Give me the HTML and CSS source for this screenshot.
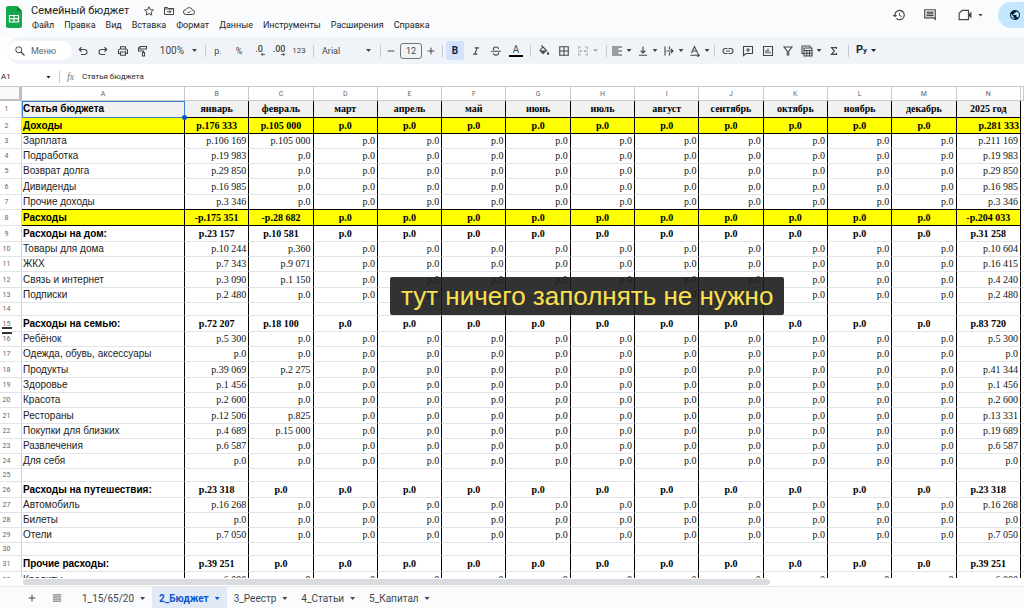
FILE: index.html
```html
<!DOCTYPE html>
<html lang="ru">
<head>
<meta charset="utf-8">
<title>Семейный бюджет</title>
<link rel="stylesheet" href="styles.css">
</head>
<body>
<svg class="sprite" aria-hidden="true">
  <symbol id="star" viewBox="0 0 24 24"><path d="M12 3.500l2.600 5.700 6.200.7-4.600 4.200 1.300 6.100L12 17l-5.500 3.200 1.300-6.100-4.600-4.200 6.200-.7z" fill="none" stroke="currentColor" stroke-width="2"/></symbol>
  <symbol id="move" viewBox="0 0 24 24"><path d="M3 5h6l2 2h10v12H3zM3 8h18M8 13.500h8M13 10.500l3 3-3 3" fill="none" stroke="currentColor" stroke-width="2"/></symbol>
  <symbol id="cloud" viewBox="0 0 24 24"><path d="M19 10.500A7 7 0 0 0 6 9a5 5 0 0 0 0 10h13a4.200 4.200 0 0 0 0-8.500zM8.500 13.500l2.500 2.500 4.500-4.500" fill="none" stroke="currentColor" stroke-width="2"/></symbol>
  <symbol id="history" viewBox="0 0 24 24"><path d="M13 3a9 9 0 0 0-9 9H1l4 4 4-4H6a7 7 0 1 1 2 5l-1.400 1.400A9 9 0 1 0 13 3zm-1 5v5l4.300 2.500.7-1.200-3.500-2.100V8z"/></symbol>
  <symbol id="chat" viewBox="0 0 24 24"><path d="M22 22l-4-4H2V2h20zM4 4v12h16V4zm2 2h12v2H6zm0 3h12v2H6zm0 3h12v2H6z" fill-rule="evenodd"/></symbol>
  <symbol id="meet" viewBox="0 0 24 24"><path d="M7 4h11v16H2V9z" fill="none" stroke="currentColor" stroke-width="2"/><path d="M18 11l5-5v12l-5-5z"/></symbol>
  <symbol id="globe" viewBox="0 0 24 24"><path d="M12 2a10 10 0 1 0 0 20 10 10 0 0 0 0-20zm-1 17.900A8 8 0 0 1 4.200 10.200L9 15v1a2 2 0 0 0 2 2zm6.900-2.500A2 2 0 0 0 16 16h-1v-3a1 1 0 0 0-1-1H8v-2h2a1 1 0 0 0 1-1V7h2a2 2 0 0 0 2-2v-.4a8 8 0 0 1 2.900 12.800z"/></symbol>
  <symbol id="search" viewBox="0 0 24 24"><circle cx="9.500" cy="9.500" r="6" fill="none" stroke="currentColor" stroke-width="2"/><path d="M14 14l7 7" stroke="currentColor" stroke-width="2.400"/></symbol>
  <symbol id="undo" viewBox="0 0 24 24"><path d="M8 19h7a5 5 0 0 0 0-10H5M9 4.500L4.500 9 9 13.500" fill="none" stroke="currentColor" stroke-width="2.200"/></symbol>
  <symbol id="redo" viewBox="0 0 24 24"><path d="M16 19H9A5 5 0 0 1 9 9h10M15 4.500L19.500 9 15 13.500" fill="none" stroke="currentColor" stroke-width="2.200"/></symbol>
  <symbol id="print" viewBox="0 0 24 24"><path d="M7 8V3.500h10V8M7 17H3V11a3 3 0 0 1 3-3h12a3 3 0 0 1 3 3v6h-4M7 14h10v6.500H7z" fill="none" stroke="currentColor" stroke-width="2.200"/><circle cx="17.500" cy="11.500" r="1.200"/></symbol>
  <symbol id="paint" viewBox="0 0 24 24"><path d="M6 3h13v5H6zM6 5.500H3V12h10v3M11 15h4v7h-4z" fill="none" stroke="currentColor" stroke-width="2.200"/></symbol>
  <symbol id="left" viewBox="0 0 24 24"><path d="M22 12H4M11 5l-7 7 7 7" fill="none" stroke="currentColor" stroke-width="4"/></symbol>
  <symbol id="right" viewBox="0 0 24 24"><path d="M2 12h18M13 5l7 7-7 7" fill="none" stroke="currentColor" stroke-width="4"/></symbol>
  <symbol id="minus" viewBox="0 0 24 24"><path d="M4 12h16" stroke="currentColor" stroke-width="2.400"/></symbol>
  <symbol id="plus" viewBox="0 0 24 24"><path d="M4 12h16M12 4v16" stroke="currentColor" stroke-width="2.400"/></symbol>
  <symbol id="italic" viewBox="0 0 24 24"><path d="M9 4.500h10M5 19.500h10M14.500 4.500l-5 15" fill="none" stroke="currentColor" stroke-width="2.800"/></symbol>
  <symbol id="strike" viewBox="0 0 24 24"><path d="M2 12.500h20M17 8c0-2.500-2-4-5-4S7 5.500 7 7.700c0 1 .4 1.800 1.200 2.400M7 16.500c0 2.300 2 3.700 5 3.700s5-1.400 5-3.700c0-.6-.1-1-.3-1.500" fill="none" stroke="currentColor" stroke-width="2.200"/></symbol>
  <symbol id="fill" viewBox="0 0 24 24"><path d="M7 1l3 3M10 4l7 7-7 6-6-6z" fill="none" stroke="currentColor" stroke-width="2.200"/><path d="M4.500 11h12L10 17z"/><path d="M20 13s-2.300 3-2.300 4.600a2.300 2.300 0 0 0 4.600 0C22.300 16 20 13 20 13z"/></symbol>
  <symbol id="borders" viewBox="0 0 24 24"><path d="M3.500 3.500h17v17h-17zM12 3v18M3 12h18" fill="none" stroke="currentColor" stroke-width="2.200"/></symbol>
  <symbol id="merge" viewBox="0 0 24 24"><path d="M8 4H3v4M3 16v4h5M16 4h5v4M21 16v4h-5M2 12h7M6.500 9l3 3-3 3M22 12h-7M17.500 9l-3 3 3 3" fill="none" stroke="currentColor" stroke-width="2"/></symbol>
  <symbol id="align" viewBox="0 0 24 24"><path d="M2 4h20M2 8h13M2 12h20M2 16h13M2 20h20" stroke="currentColor" stroke-width="2.200"/></symbol>
  <symbol id="valign" viewBox="0 0 24 24"><path d="M4 20.500h16M12 3v13M7.500 11.500L12 16l4.500-4.500" fill="none" stroke="currentColor" stroke-width="2.200"/></symbol>
  <symbol id="wrap" viewBox="0 0 24 24"><path d="M4 3v18M13 3v6M13 15v6M7 12h13M16 8l4 4-4 4" fill="none" stroke="currentColor" stroke-width="2.200"/></symbol>
  <symbol id="rotate" viewBox="0 0 24 24"><path d="M5 16L11 3l6 13M7 12h8M3 20.500h17M17 17l3.500 3.500L17 24" fill="none" stroke="currentColor" stroke-width="2.200"/></symbol>
  <symbol id="link" viewBox="0 0 24 24"><path d="M11 7H7a5 5 0 0 0 0 10h4M13 7h4a5 5 0 0 1 0 10h-4M8 12h8" fill="none" stroke="currentColor" stroke-width="2.200"/></symbol>
  <symbol id="note" viewBox="0 0 24 24"><path d="M3 3h18v14H8l-5 4zM12 6v8M8 10h8" fill="none" stroke="currentColor" stroke-width="2.200"/></symbol>
  <symbol id="chart" viewBox="0 0 24 24"><path d="M3 3h18v18H3zM8 17v-7M12 17V7M16 17v-4" fill="none" stroke="currentColor" stroke-width="2.200"/></symbol>
  <symbol id="filter" viewBox="0 0 24 24"><path d="M4 4h16l-6.500 8.500V20h-3v-7.500z" fill="none" stroke="currentColor" stroke-width="2.200"/></symbol>
  <symbol id="views" viewBox="0 0 24 24"><path d="M18 5V2H2v15h3M6 6h16v16H6zM6 11h16M6 16.500h16M11.500 11v11M17 11v11" fill="none" stroke="currentColor" stroke-width="2.200"/></symbol>
  <symbol id="sigma" viewBox="0 0 24 24"><path d="M18 7V4H6l7 8-7 8h12v-3" fill="none" stroke="currentColor" stroke-width="2.800"/></symbol>
  <symbol id="list" viewBox="0 0 24 24"><path d="M2 4.500h20M2 9.500h20M2 14.500h20M2 19.500h20" stroke="currentColor" stroke-width="2"/></symbol>
</svg>

<header class="header">
  <svg class="logo" viewBox="0 0 16 22" aria-hidden="true">
    <path d="M2 0h9l5 5v15a2 2 0 0 1-2 2H2a2 2 0 0 1-2-2V2a2 2 0 0 1 2-2z" fill="#14a84b"/>
    <path d="M11 0l5 5h-5z" fill="#0b7d35"/>
    <path d="M3.500 9.500h9v6.500h-9zM8 9.500V16M3.500 12.700h9" fill="none" stroke="#fff" stroke-width="1.200"/>
  </svg>
  <div class="doc">
    <div class="title-row">
      <h1 class="title">Семейный бюджет</h1>
      <button class="plain" aria-label="Пометить"><svg class="icon"><use href="#star"/></svg></button>
      <button class="plain" aria-label="Переместить"><svg class="icon"><use href="#move"/></svg></button>
      <button class="plain" aria-label="Статус документа"><svg class="icon"><use href="#cloud"/></svg></button>
    </div>
    <nav class="menus">
      <button class="plain">Файл</button><button class="plain">Правка</button><button class="plain">Вид</button><button class="plain">Вставка</button><button class="plain">Формат</button><button class="plain">Данные</button><button class="plain">Инструменты</button><button class="plain">Расширения</button><button class="plain">Справка</button>
    </nav>
  </div>
  <div class="actions">
    <button class="plain" aria-label="История версий"><svg class="icon-lg"><use href="#history"/></svg></button>
    <button class="plain" aria-label="Комментарии"><svg class="icon-lg"><use href="#chat"/></svg></button>
    <button class="plain meet" aria-label="Встреча"><svg class="icon-lg"><use href="#meet"/></svg><span class="caret"></span></button>
    <button class="share" aria-label="Доступ"><svg class="icon"><use href="#globe"/></svg></button>
  </div>
</header>

<div class="toolbar" role="toolbar">
  <label class="search"><svg class="icon"><use href="#search"/></svg><input type="text" placeholder="Меню" aria-label="Меню"></label>
  <button class="tool" aria-label="Отменить"><svg class="icon"><use href="#undo"/></svg></button>
  <button class="tool" aria-label="Повторить"><svg class="icon"><use href="#redo"/></svg></button>
  <button class="tool" aria-label="Печать"><svg class="icon"><use href="#print"/></svg></button>
  <button class="tool" aria-label="Копировать формат"><svg class="icon"><use href="#paint"/></svg></button>
  <button class="tool zoom">100%<span class="caret"></span></button>
  <span class="sep"></span>
  <button class="tool money">р.</button>
  <button class="tool">%</button>
  <button class="tool decimals" aria-label="Меньше знаков">.0<svg class="arrow"><use href="#left"/></svg></button>
  <button class="tool decimals" aria-label="Больше знаков">.00<svg class="arrow"><use href="#right"/></svg></button>
  <button class="tool small">123</button>
  <span class="sep"></span>
  <button class="tool font">Arial<span class="caret"></span></button>
  <span class="sep"></span>
  <button class="tool step" aria-label="Уменьшить"><svg class="icon-sm"><use href="#minus"/></svg></button>
  <input class="size" type="text" value="12" aria-label="Размер шрифта">
  <button class="tool step" aria-label="Увеличить"><svg class="icon-sm"><use href="#plus"/></svg></button>
  <span class="sep"></span>
  <button class="tool bold">B</button>
  <button class="tool" aria-label="Курсив"><svg class="icon-sm"><use href="#italic"/></svg></button>
  <button class="tool" aria-label="Зачеркнутый"><svg class="icon"><use href="#strike"/></svg></button>
  <button class="tool"><span class="color">A</span></button>
  <span class="sep"></span>
  <button class="tool" aria-label="Заливка"><svg class="icon"><use href="#fill"/></svg></button>
  <button class="tool" aria-label="Границы"><svg class="icon"><use href="#borders"/></svg></button>
  <button class="tool merge" aria-label="Объединить"><svg class="icon"><use href="#merge"/></svg><span class="caret"></span></button>
  <span class="sep"></span>
  <div class="aligns">
    <button class="tool drop" aria-label="Выравнивание"><svg class="icon"><use href="#align"/></svg><span class="caret"></span></button>
    <button class="tool drop" aria-label="По вертикали"><svg class="icon"><use href="#valign"/></svg><span class="caret"></span></button>
    <button class="tool drop" aria-label="Перенос"><svg class="icon"><use href="#wrap"/></svg><span class="caret"></span></button>
    <button class="tool drop" aria-label="Поворот"><svg class="icon"><use href="#rotate"/></svg><span class="caret"></span></button>
  </div>
  <span class="sep"></span>
  <button class="tool" aria-label="Ссылка"><svg class="icon"><use href="#link"/></svg></button>
  <button class="tool" aria-label="Комментарий"><svg class="icon"><use href="#note"/></svg></button>
  <button class="tool" aria-label="Диаграмма"><svg class="icon"><use href="#chart"/></svg></button>
  <button class="tool" aria-label="Фильтр"><svg class="icon"><use href="#filter"/></svg></button>
  <button class="tool views" aria-label="Фильтры"><svg class="icon"><use href="#views"/></svg><span class="caret"></span></button>
  <button class="tool" aria-label="Функции"><svg class="icon-sm"><use href="#sigma"/></svg></button>
  <span class="sep"></span>
  <button class="tool python"><span>P<small>y</small></span><span class="caret"></span></button>
</div>

<div class="formula">
  <input class="name-box" type="text" value="A1" aria-label="Ячейка">
  <span class="caret"></span>
  <span class="sep"></span>
  <span class="fx">fx</span>
  <input class="formula-input" type="text" value="Статья бюджета" aria-label="Формула">
</div>

<main class="sheet">
  <table class="grid">
    <colgroup id="cols"><col class="col-num"><col class="col-name"></colgroup>
    <thead><tr id="letters"><th class="corner"></th></tr></thead>
    <tbody id="rows"></tbody>
  </table>
  <div class="freeze"></div>
  <div class="caption">тут ничего заполнять не нужно</div>
</main>
<div class="scroll"><div class="thumb"></div></div>

<footer class="tabs">
  <button class="plain add" aria-label="Добавить лист"><svg class="icon-sm"><use href="#plus"/></svg></button>
  <button class="plain all" aria-label="Все листы"><svg class="icon-sm"><use href="#list"/></svg></button>
  <button class="tab">1_15/65/20<span class="caret"></span></button>
  <button class="tab active">2_Бюджет<span class="caret"></span></button>
  <button class="tab">3_Реестр<span class="caret"></span></button>
  <button class="tab">4_Статьи<span class="caret"></span></button>
  <button class="tab">5_Капитал<span class="caret"></span></button>
</footer>
<script src="grid.js"></script>
</body>
</html>
```

FILE: grid.js
```js
// Each row: kind, name, January, February, year total.
const rows = [
  ["head", "Статья бюджета"],
  ["total income", "Доходы", "176 333", "105 000", "281 333"],
  ["", "Зарплата", "106 169", "105 000", "211 169"],
  ["", "Подработка", "19 983", "0", "19 983"],
  ["", "Возврат долга", "29 850", "0", "29 850"],
  ["tall", "Дивиденды", "16 985", "0", "16 985"],
  ["last", "Прочие доходы", "3 346", "0", "3 346"],
  ["total", "Расходы", "-175 351", "-28 682", "-204 033"],
  ["group", "Расходы на дом:", "23 157", "10 581", "31 258"],
  ["", "Товары для дома", "10 244", "360", "10 604"],
  ["", "ЖКХ", "7 343", "9 071", "16 415"],
  ["tall", "Связь и интернет", "3 090", "1 150", "4 240"],
  ["", "Подписки", "2 480", "0", "2 480"],
  ["blank"],
  ["group", "Расходы на семью:", "72 207", "18 100", "83 720"],
  ["", "Ребёнок", "5 300", "0", "5 300"],
  ["", "Одежда, обувь, аксессуары", "0", "0", "0"],
  ["tall", "Продукты", "39 069", "2 275", "41 344"],
  ["", "Здоровье", "1 456", "0", "1 456"],
  ["", "Красота", "2 600", "0", "2 600"],
  ["tall", "Рестораны", "12 506", "825", "13 331"],
  ["", "Покупки для близких", "4 689", "15 000", "19 689"],
  ["", "Развлечения", "6 587", "0", "6 587"],
  ["", "Для себя", "0", "0", "0"],
  ["blank"],
  ["group", "Расходы на путешествия:", "23 318", "0", "23 318"],
  ["", "Автомобиль", "16 268", "0", "16 268"],
  ["", "Билеты", "0", "0", "0"],
  ["", "Отели", "7 050", "0", "7 050"],
  ["blank"],
  ["group", "Прочие расходы:", "39 251", "0", "39 251"],
  ["tall", "Кредиты", "6 000", "0", "6 000"]
];
const months = ["январь", "февраль", "март", "апрель", "май", "июнь", "июль",
  "август", "сентябрь", "октябрь", "ноябрь", "декабрь", "2025 год"];

function money(value) {
  return value[0] === "-" ? "-р." + value.slice(1) : "р." + value;
}

function cell(tag, text, className) {
  const el = document.createElement(tag);
  el.textContent = text || "";
  if (className) el.className = className;
  return el;
}

const cols = document.getElementById("cols");
const letters = document.getElementById("letters");
for (const letter of "ABCDEFGHIJKLMN") {
  letters.append(cell("th", letter));
  if (letter !== "A") cols.append(document.createElement("col"));
}
const edge = document.createElement("col");
edge.className = "col-edge";
cols.append(edge);
letters.append(cell("th", ""));

const body = document.getElementById("rows");
rows.forEach(([kind, name, jan, feb, year], index) => {
  const tr = document.createElement("tr");
  tr.className = kind;
  tr.append(cell("th", String(index + 1), "num"));
  tr.append(cell("td", name, "name"));
  months.forEach((month, i) => {
    let text = "";
    if (kind === "head") text = month;
    else if (kind !== "blank") text = money(i === 0 ? jan : i === 1 ? feb : i === 12 ? year : "0");
    tr.append(cell("td", text, "val"));
  });
  tr.append(cell("td", "", "edge"));
  body.append(tr);
});
```

FILE: styles.css
```css
* { box-sizing: border-box; }
body {
  margin: 0;
  height: 100vh;
  display: flex;
  flex-direction: column;
  overflow: hidden;
  background: #fff;
  color: #444746;
  font: 9px/12px Roboto, "Liberation Sans", sans-serif;
}
button, input { font: inherit; color: inherit; border: 0; padding: 0; background: none; outline: none; min-width: 0; }
svg { fill: currentColor; display: block; flex: none; }
.sprite { position: absolute; width: 0; height: 0; }
.icon { width: 12px; height: 12px; }
.icon-sm { width: 10px; height: 10px; }
.icon-lg { width: 14px; height: 14px; }
.plain { display: flex; align-items: center; }
.caret { flex: none; width: 5px; height: 3px; background: currentColor; clip-path: polygon(0 0, 100% 0, 50% 100%); }
.sep { flex: none; width: 8px; height: 12px; background: linear-gradient(#c7cbd1, #c7cbd1) center / 1px 100% no-repeat; }

.header { display: flex; flex: none; height: 37px; background: #f9fbfd; }
.logo { width: 16px; height: 22px; margin: 6px 9px 0 6px; }
.doc { flex: 1; padding-top: 3px; }
.title-row { display: flex; align-items: center; gap: 8px; height: 16px; }
.title { margin: 0 6px 0 0; font: 400 11px/16px Roboto, sans-serif; color: #1f1f1f; }
.menus { display: flex; gap: 10px; padding-left: 1px; color: #1f1f1f; }
.actions { display: flex; align-items: center; height: 30px; gap: 17px; }
.meet { gap: 6px; margin: 0 -2px 0 4px; }
.share { display: flex; align-items: center; justify-content: flex-end; width: 26px; height: 26px; padding-right: 3px; background: #c2e7ff; border-radius: 13px 0 0 13px; color: #001d35; }

.toolbar { display: flex; align-items: center; flex: none; height: 27px; margin-left: 7px; background: #f0f4f9; border-radius: 13px 0 0 13px; }
.search { display: flex; align-items: center; gap: 5px; width: 65px; height: 19px; margin-right: 1px; padding-left: 7px; background: #fff; border-radius: 10px; }
.search input { width: 36px; }
.search input::placeholder { color: #5f6368; opacity: 1; }
.tool { display: flex; align-items: center; justify-content: center; flex: none; width: 20px; height: 19px; border-radius: 2px; }
.zoom { width: 48px; justify-content: flex-end; gap: 8px; padding-right: 4px; font-size: 10px; }
.money { width: 18px; margin-right: 2px; }
.small { font-size: 8px; }
.decimals { flex-direction: column; font-size: 9px; line-height: 8px; font-weight: 500; }
.arrow { width: 6px; height: 5px; margin: -1px 0 0 8px; }
.font { width: 59px; justify-content: space-between; padding: 0 5px; font-size: 9px; }
.step { width: 14px; }
.size { width: 22px; height: 16px; margin: 0 2px; border: 1px solid #747775; border-radius: 3px; text-align: center; }
.bold { width: 18px; margin-right: 2px; background: #d3e3fd; color: #041e49; font-weight: 700; font-size: 10px; }
.color { width: 14px; border-bottom: 2px solid #000; line-height: 10px; font-size: 10px; }
.merge { width: 28px; gap: 4px; padding-right: 1px; color: #a9acb0; }
.aligns { display: flex; gap: 4px; }
.drop { width: 22px; gap: 4px; }
.views { width: 26px; gap: 4px; }
.python { width: 28px; gap: 4px; color: #1f1f1f; font-weight: 700; font-size: 11px; }
.python small { font-size: 8px; }

.formula { display: flex; align-items: center; flex: none; height: 22px; padding-top: 4px; font-size: 8px; color: #1f1f1f; }
.name-box { width: 46px; padding-left: 1px; }
.formula .sep { margin: 0 4px; }
.fx { width: 15px; font: italic 10px/12px "Liberation Serif", serif; color: #747775; }
.formula-input { flex: 1; }

.sheet { position: relative; flex: 1; min-height: 0; overflow: hidden; }
.grid { width: 100%; table-layout: fixed; border-collapse: separate; border-spacing: 0; }
.col-num { width: 22px; }
.col-name { width: 163px; }
.col-edge { width: 3px; }
.grid th, .grid td { height: 15px; padding: 0; overflow: hidden; white-space: nowrap; line-height: 12px; vertical-align: middle; }
.grid thead th { height: 15px; border: solid #c7c9cc; border-width: 1px 1px 1px 0; font: 400 7px/12px Roboto, sans-serif; color: #5f6368; }
.grid thead .corner { border-right: 3px solid #bdbfc2; border-bottom: 2px solid #bdbfc2; background: #f8f9fa; }
.num { border-right: 1px solid #d0d2d5; border-bottom: 1px solid #e1e3e6; text-align: center; }
.grid .num { padding-right: 8px; font: 400 7px/12px Roboto, sans-serif; color: #5f6368; }
.grid .name { padding-left: 1px; border-bottom: 1px solid #e1e3e6; border-right: 1px solid #000; font: 10px/12px "Liberation Sans", sans-serif; color: #222; }
.grid .val { padding-right: 2px; border-bottom: 1px solid #e1e3e6; border-right: 1px solid #000; text-align: right; font: 10px/12px "Liberation Serif", serif; color: #111; }
.edge { border-bottom: 1px solid #e1e3e6; }
.grid .head > * { height: 17px; }
.grid .tall > *, .grid .total > *, .grid .group > * { height: 16px; }
.grid .blank > * { height: 13px; line-height: 10px; }
.grid .head .name, .grid .head .val, .grid .total .name, .grid .total .val, .grid .group .name, .grid .group .val { font-weight: 700; color: #000; }
.grid .head .val, .grid .total .val, .grid .group .val { padding-right: 0; text-align: center; }
.grid .income .val:nth-last-child(2) { padding-right: 1px; text-align: right; }
.head .name, .head .val { background: #f1f1f1; }
.total .name, .total .val { background: #ff0; }
.grid .head .name, .grid .head .val, .grid .total .name, .grid .total .val, .grid .last .name, .grid .last .val { border-bottom-color: #000; }
.grid .head .name { position: relative; overflow: visible; border-color: #3f7fd0; box-shadow: inset 1px 1px #3f7fd0; }
.head .name::after { content: ""; position: absolute; right: -3px; bottom: -3px; width: 5px; height: 5px; border-radius: 50%; background: #0b57d0; }
.freeze { position: absolute; left: 2px; top: 241px; width: 10px; height: 7px; border: solid #333; border-width: 2px 0; background: #fff; }
.caption { position: absolute; left: 390px; top: 191px; padding: 4px 11px; border-radius: 2px; background: rgba(28, 28, 28, .9); color: #fbe04f; font: 26px/30px "Liberation Sans", sans-serif; white-space: nowrap; }

.scroll { flex: none; height: 8px; padding: 1px 254px 1px 23px; }
.thumb { height: 6px; border-radius: 3px; background: #dadce0; }
.tabs { display: flex; flex: none; height: 22px; background: #f9fbfd; border-top: 1px solid #e7eaed; font-size: 10px; }
.add { margin-left: 27px; }
.all { margin: 0 13px 0 15px; }
.tab { display: flex; align-items: center; gap: 6px; padding: 2px 7px 0 7px; }
.active { background: #e1e9f7; color: #0b57d0; font-weight: 700; }
```
